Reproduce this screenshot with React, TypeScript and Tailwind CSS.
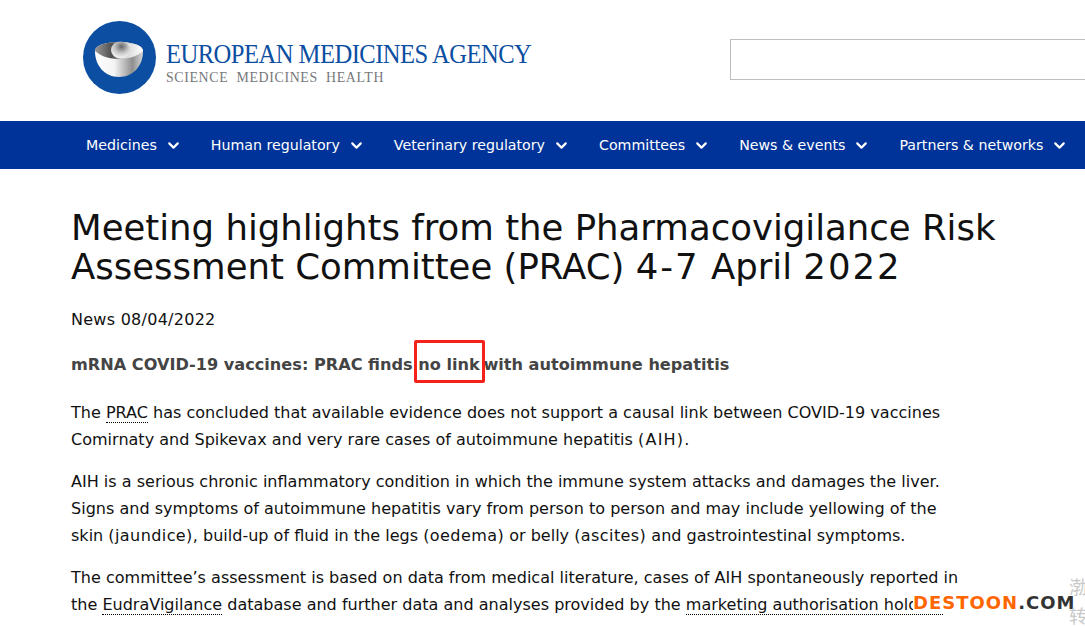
import { ChevronDown } from 'lucide-react'

const navItems = [
  'Medicines',
  'Human regulatory',
  'Veterinary regulatory',
  'Committees',
  'News & events',
  'Partners & networks',
]

function Logo() {
  return (
    <svg width="74" height="74" viewBox="0 0 74 74" className="flex-none">
      <defs>
        <linearGradient id="bowl" x1="0" x2="1" y1="0" y2="0">
          <stop offset="0" stopColor="#ffffff" />
          <stop offset="0.4" stopColor="#f4f4f4" />
          <stop offset="0.78" stopColor="#8f8f8f" />
          <stop offset="1" stopColor="#d8d8d8" />
        </linearGradient>
        <linearGradient id="inner" x1="0" x2="1" y1="0" y2="0">
          <stop offset="0" stopColor="#9a9a9a" />
          <stop offset="0.35" stopColor="#4f4f4f" />
          <stop offset="0.6" stopColor="#d0d0d0" />
          <stop offset="1" stopColor="#ffffff" />
        </linearGradient>
        <radialGradient id="ball" cx="0.55" cy="0.3" r="0.7">
          <stop offset="0" stopColor="#666666" />
          <stop offset="0.55" stopColor="#c8c8c8" />
          <stop offset="1" stopColor="#f8f8f8" />
        </radialGradient>
      </defs>
      <circle cx="36.5" cy="36.5" r="36.5" fill="#0b4ea2" />
      <path d="M12 30 C12 24 24 21 36 21 C48 21 60 24 60 30 C60 45 50 56 36 56 C22 56 12 45 12 30 Z" fill="url(#bowl)" />
      <path d="M12 30 C12 24 24 21 36 21 C48 21 60 24 60 30 C53 36 45 38 36 38 C27 38 19 36 12 30 Z" fill="url(#inner)" />
      <ellipse cx="37.5" cy="29" rx="9.5" ry="8.5" fill="url(#ball)" />
    </svg>
  )
}

export default function App() {
  return (
    <div className="relative h-[626px] w-[1085px] overflow-hidden bg-white font-['DejaVu_Sans',sans-serif] text-[#111]">
      <header className="flex h-[121px] items-start pl-[83px]">
        <div className="mt-[21px] flex items-center">
          <Logo />
          <div className="ml-[9px] pt-[7px] font-['Liberation_Serif',serif]">
            <div className="origin-left scale-x-[0.912] whitespace-nowrap text-[27px] leading-[30px] tracking-[-0.6px] text-[#0b4ea2]">EUROPEAN MEDICINES AGENCY</div>
            <div className="origin-left scale-x-[0.924] whitespace-nowrap text-[15px] leading-[16px] tracking-[0.7px] text-[#77787b]">SCIENCE&nbsp; MEDICINES&nbsp; HEALTH</div>
          </div>
        </div>
        <div className="ml-auto mt-[39px] h-[41px] w-[400px] flex-none translate-x-[45px] border border-[#bdbdbd] bg-white" />
      </header>

      <nav className="flex h-[48px] items-center gap-[29px] bg-[#003399] pl-[86px] pt-[1px] text-[14.2px] text-white">
        {navItems.map((item) => (
          <div key={item} className="flex flex-none items-center gap-[8px]">
            <span>{item}</span>
            <ChevronDown size={17} strokeWidth={3} />
          </div>
        ))}
      </nav>

      <main className="box-content w-[895px] pl-[71px] pt-[39px] text-[16.04px] leading-[27px]">
        <h1 className="w-[940px] text-[35.5px] font-normal leading-[39px]">
          Meeting highlights from the Pharmacovigilance Risk Assessment Committee (PRAC) <span className="tracking-[2px]">4-7</span> April <span className="tracking-[2px]">2022</span>
        </h1>
        <p className="mt-[20px] tracking-[0.25px]">News 08/04/2022</p>
        <p className="mt-[18px] text-[16.14px] font-bold text-[#444]">
          mRNA COVID-19 vaccines: PRAC finds{' '}
          <span className="relative mr-[-2px]">
            no link
            <span className="absolute -bottom-[9px] -left-[4px] -right-[5px] -top-[15px] rounded-[2px] border-[3px] border-[#f5221b]" />
          </span>{' '}
          with autoimmune hepatitis
        </p>
        <p className="mt-[21px]">
          The <span className="border-b border-dotted border-black">PRAC</span> has concluded that available evidence does not support a causal link between COVID-19 vaccines Comirnaty and Spikevax and very rare cases of autoimmune hepatitis <span className="tracking-[1.2px]">(AIH)</span>.
        </p>
        <p className="mt-[15px]">
          AIH is a serious chronic inflammatory condition in which the immune system attacks and damages the liver. Signs and symptoms of autoimmune hepatitis vary from person to person and may include yellowing of the skin <span className="tracking-[0.4px]">(jaundice)</span>, build-up of fluid in the legs <span className="tracking-[0.4px]">(oedema)</span> or belly <span className="tracking-[0.4px]">(ascites)</span> and gastrointestinal symptoms.
        </p>
        <p className="mt-[15px]">
          The committee’s assessment is based on data from medical literature, cases of AIH spontaneously reported in the <span className="border-b border-dotted border-black">EudraVigilance</span> database and further data and analyses provided by the <span className="border-b border-dotted border-black">marketing authorisation holders</span>
        </p>
      </main>

      <div className="absolute left-[913px] top-[595px] h-[16px] whitespace-nowrap bg-white text-[18px] font-bold leading-[16px] tracking-[1px]">
        <span className="text-[#ff6600]">DESTOON</span>
        <span className="text-[#333]">.COM</span>
      </div>
      <div className="absolute left-[1069px] top-[572px] w-[18px] font-['Noto_Sans_CJK_SC',sans-serif] text-[18px] leading-[29px] text-[#c8c8c8]">
        渤<br />转
      </div>
    </div>
  )
}
